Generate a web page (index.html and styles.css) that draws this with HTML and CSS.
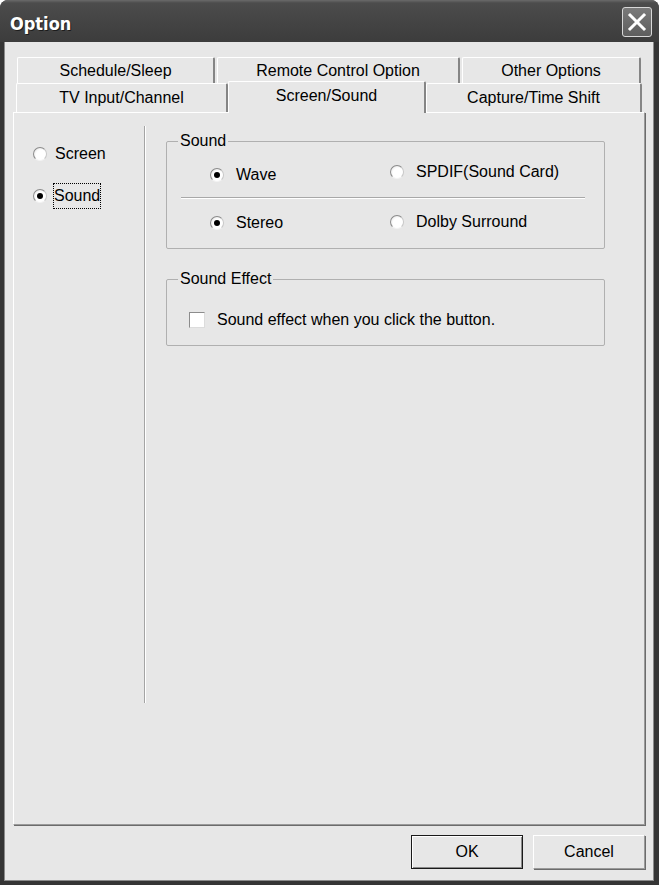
FILE: index.html
```html
<!DOCTYPE html>
<html>
<head>
<meta charset="utf-8">
<title>Option</title>
<link rel="stylesheet" href="styles.css">
</head>
<body>
<div class="window">
  <div class="titlebar">
    <span class="title">Option</span>
    <span class="close"><svg width="22" height="22" viewBox="0 0 22 22"><path d="M4 4 L18 18 M18 4 L4 18" stroke="#fff" stroke-width="3" stroke-linecap="square"/></svg></span>
  </div>
  <div class="client">
    <div class="tabs">
      <div class="tabrow back">
        <div class="tab t-sched">Schedule/Sleep</div>
        <div class="tab t-remote">Remote Control Option</div>
        <div class="tab t-other">Other Options</div>
      </div>
      <div class="tabrow front">
        <div class="tab t-tv">TV Input/Channel</div>
        <div class="tab t-screen selected">Screen/Sound</div>
        <div class="tab t-capture">Capture/Time Shift</div>
      </div>
    </div>
    <div class="panel">
      <div class="nav">
        <div class="opt"><span class="radio"></span><span class="lbl">Screen</span></div>
        <div class="opt"><span class="radio checked"></span><span class="lbl focus">Sound</span></div>
      </div>
      <div class="vsep"></div>
      <div class="content">
        <fieldset class="group g-sound">
          <legend>Sound</legend>
          <div class="grow r1">
            <div class="opt c1 wave"><span class="radio checked"></span><span class="lbl">Wave</span></div>
            <div class="opt c2"><span class="radio"></span><span class="lbl">SPDIF(Sound Card)</span></div>
          </div>
          <div class="hsep"></div>
          <div class="grow r2">
            <div class="opt c1"><span class="radio checked"></span><span class="lbl">Stereo</span></div>
            <div class="opt c2"><span class="radio"></span><span class="lbl">Dolby Surround</span></div>
          </div>
        </fieldset>
        <fieldset class="group g-effect">
          <legend>Sound Effect</legend>
          <div class="opt chk"><span class="checkbox"></span><span class="lbl">Sound effect when you click the button.</span></div>
        </fieldset>
      </div>
    </div>
    <div class="buttons">
      <div class="btn default">OK</div>
      <div class="btn">Cancel</div>
    </div>
  </div>
</div>
</body>
</html>
```
FILE: styles.css
```css
html, body {
  margin: 0;
  padding: 0;
  background: #ffffff;
}
body {
  font-family: "Liberation Sans", Arial, sans-serif;
  font-size: 16px;
  color: #000;
}
.window {
  width: 659px;
  height: 885px;
  display: flex;
  flex-direction: column;
  background: #353535;
  border-radius: 8px 8px 0 0;
  box-sizing: border-box;
}
.titlebar {
  height: 42px;
  flex: none;
  display: flex;
  align-items: center;
  justify-content: space-between;
  padding: 0 7px 0 10px;
  background: linear-gradient(#6a6a6a 0px, #4c4c4c 3px, #464646 40%, #3c3c3c 100%);
  border-radius: 8px 8px 0 0;
  box-sizing: border-box;
}
.title {
  font-family: "DejaVu Sans Condensed", "DejaVu Sans", sans-serif;
  font-stretch: condensed;
  font-weight: bold;
  font-size: 18px;
  color: #fff;
  text-shadow: 1px 1px 0 #1c1c1c;
  margin-top: 5px;
}
.close {
  width: 30px;
  height: 30px;
  box-sizing: border-box;
  border: 1px solid #d8d8d8;
  border-radius: 3px;
  background: linear-gradient(#7a7a7a, #5e5e5e);
  display: flex;
  align-items: center;
  justify-content: center;
  margin-top: 2px;
}
.client {
  flex: 1;
  display: flex;
  flex-direction: column;
  margin: 0 5px 4px 4px;
  background: #e7e7e7;
  border-left: 1px solid #8a8a8a;
  border-bottom: 1px solid #8a8a8a;
  border-right: 1px solid #8a8a8a;
  padding: 15px 7px 0 8px;
}
.tabs {
  display: flex;
  flex-direction: column;
}
.tabrow {
  display: flex;
  align-items: flex-start;
}
.tabrow.back {
  height: 26px;
  padding-left: 4px;
  gap: 2px;
}
.tabrow.front {
  height: 29px;
  padding-left: 3px;
}
.tab {
  box-sizing: border-box;
  background: #e7e7e7;
  border-top: 1px solid #ffffff;
  border-left: 1px solid #ffffff;
  border-right: 2px solid #858585;
  border-radius: 2px 2px 0 0;
  text-align: center;
  white-space: nowrap;
}
.back .tab {
  height: 26px;
  line-height: 25px;
}
.front .tab {
  height: 29px;
  line-height: 28px;
}
.t-sched { width: 198px; }
.t-remote { width: 243px; }
.t-other { width: 179px; }
.t-tv { width: 212px; }
.t-screen { width: 198px; }
.t-capture { width: 216px; }
.front .tab.selected {
  position: relative;
  z-index: 1;
  height: 32px;
  margin-top: -2px;
  line-height: 28px;
}
.panel {
  flex: 1;
  display: flex;
  align-items: flex-start;
  border-top: 1px solid #ffffff;
  border-left: 1px solid #ffffff;
  border-right: 1px solid #9a9a9a;
  border-bottom: 1px solid #9a9a9a;
  box-shadow: 1px 1px 0 #6c6c6c;
  margin-right: 1px;
}
.nav {
  width: 130px;
  flex: none;
  padding: 31px 0 0 19px;
  box-sizing: border-box;
  display: flex;
  flex-direction: column;
  gap: 22px;
}
.opt {
  display: flex;
  align-items: center;
  height: 20px;
  white-space: nowrap;
}
.radio {
  width: 14px;
  height: 14px;
  box-sizing: border-box;
  border-radius: 50%;
  background: radial-gradient(circle at 60% 60%, #ffffff 50%, #f0f0f0 70%);
  border: 1px solid;
  border-color: #8c8c8c #c8c8c8 #f4f4f4 #8c8c8c;
  position: relative;
  flex: none;
}
.radio.checked::after {
  content: "";
  position: absolute;
  left: 3px;
  top: 3px;
  width: 6px;
  height: 6px;
  border-radius: 50%;
  background: #000;
}
.nav .lbl {
  margin-left: 8px;
}
.lbl.focus {
  border: 1px dotted #000;
  padding: 2px 0;
  line-height: 20px;
  margin-left: 6px !important;
}
.vsep {
  flex: none;
  width: 1px;
  height: 577px;
  margin-top: 13px;
  background: #a4a4a4;
  border-right: 1px solid #ffffff;
}
.content {
  padding: 19px 0 0 20px;
  display: flex;
  flex-direction: column;
  gap: 21px;
}
.group {
  margin: 0;
  width: 439px;
  box-sizing: border-box;
  border: 1px solid #b0b0b0;
  border-radius: 2px;
  padding: 0;
  min-width: 0;
}
.group legend {
  margin-left: 11px;
  padding: 0 2px;
  line-height: 18px;
}
.g-sound {
  padding-bottom: 15px;
}
.grow {
  display: flex;
  height: 20px;
}
.grow.r1 {
  margin-top: 13px;
}
.grow .c1 {
  width: 180px;
  padding-left: 43px;
}
.grow .c1 .lbl,
.grow .c2 .lbl {
  margin-left: 12px;
}
.grow .wave {
  margin-top: 2px;
}
.grow .c2 {
  margin-top: -1px;
}
.hsep {
  height: 1px;
  background: #a8a8a8;
  border-bottom: 1px solid #ffffff;
  margin: 14px 19px 14px 14px;
}
.g-effect {
  padding-bottom: 15px;
}
.chk {
  margin-top: 22px;
  padding-left: 22px;
}
.checkbox {
  width: 16px;
  height: 16px;
  box-sizing: border-box;
  background: #ffffff;
  border: 1px solid;
  border-color: #8c8c8c #dcdcdc #dcdcdc #8c8c8c;
  flex: none;
}
.chk .lbl {
  margin-left: 12px;
}
.buttons {
  display: flex;
  justify-content: flex-end;
  gap: 10px;
  margin: 10px 1px 11px 0;
}
.btn {
  width: 112px;
  height: 34px;
  box-sizing: border-box;
  background: #e7e7e7;
  border-top: 1px solid #ffffff;
  border-left: 1px solid #ffffff;
  border-right: 1px solid #9a9a9a;
  border-bottom: 1px solid #9a9a9a;
  box-shadow: 1px 1px 0 #6c6c6c;
  display: flex;
  align-items: center;
  justify-content: center;
}
.btn.default {
  border: 1px solid #1a1a1a;
  box-shadow: inset 1px 1px 0 #ffffff, inset -1px -1px 0 #8a8a8a;
}
```
